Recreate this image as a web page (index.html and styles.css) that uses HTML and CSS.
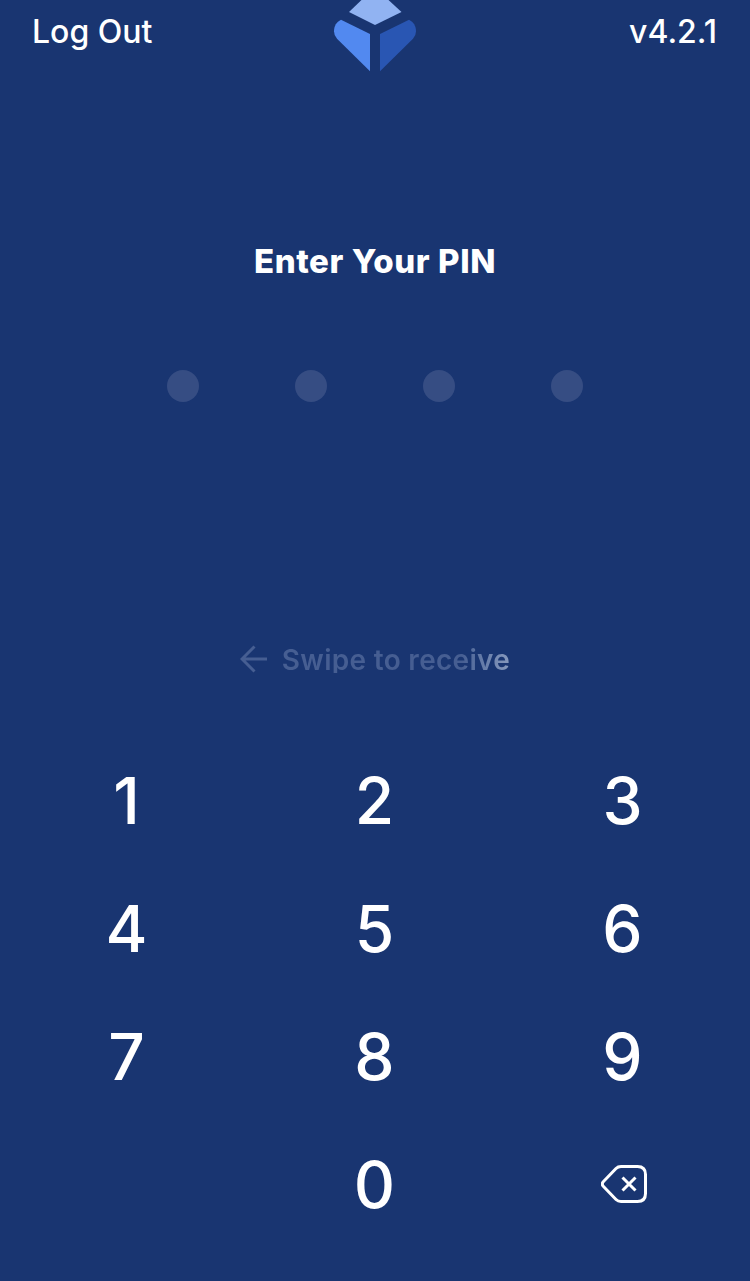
FILE: index.html
```html
<!DOCTYPE html>
<html lang="en">
    <head>
        <meta charset="UTF-8">
        <meta name="viewport" content="width=device-width, initial-scale=1.0">
        <title>Enter Your PIN</title>
        <link rel="stylesheet" href="styles.css">
    </head>
    <body>
        <header class="top-bar">
            <a class="logout">Log Out</a>
            <svg class="logo" viewBox="0 0 84 72" aria-hidden="true">
                <path fill="#91b3f2" d="M28.5 0h27L68.5 12 42 25 16 12z"/>
                <path fill="#5289f0" d="M8 19.800 37 34v37.300L4 38.800Q1 35.500 1 31.500C1 26 3.500 22 8 19.800z"/>
                <path fill="#2956b3" d="M76 19.800 47 34v37.300L80 38.800Q83 35.500 83 31.500C83 26 80.500 22 76 19.800z"/>
            </svg>
            <span class="version">v4.2.1</span>
        </header>

        <main>
            <h1 class="title">Enter Your PIN</h1>
            <div class="dots">
                <span class="dot"></span>
                <span class="dot"></span>
                <span class="dot"></span>
                <span class="dot"></span>
            </div>
            <div class="swipe">
                <svg class="arrow" viewBox="0 0 28 28" aria-hidden="true">
                    <path d="M27 14H2M14.500 1.500 2 14l12.500 12.500"/>
                </svg>
                <span class="swipe-text">Swipe to receive</span>
            </div>
            <div class="keypad">
                <button class="key">1</button>
                <button class="key">2</button>
                <button class="key">3</button>
                <button class="key">4</button>
                <button class="key">5</button>
                <button class="key">6</button>
                <button class="key">7</button>
                <button class="key">8</button>
                <button class="key">9</button>
                <span></span>
                <button class="key">0</button>
                <button class="key" aria-label="Delete">
                    <svg class="backspace" viewBox="0 0 46 38" aria-hidden="true">
                        <path d="M20 1.500h16.500q8 0 8 8v19q0 8-8 8H20q-3 0-5-2L2.500 21.500q-2.500-2.500 0-5L15 3.500q2-2 5-2z"/>
                        <path d="m21.500 12.500 13 13m0-13-13 13"/>
                    </svg>
                </button>
            </div>
        </main>
    </body>
</html>
```

FILE: styles.css
```css
body {
    margin: 0;
    background: #193571;
    color: #fff;
    font-family: Inter, sans-serif;
}
.top-bar {
    display: grid;
    grid-template-columns: 1fr 84px 1fr;
    height: 72px;
    padding: 0 32px;
}
.logout, .version {
    font-size: 32px;
    font-weight: 450;
    line-height: 64px;
}
.version {
    padding-right: 1px;
    text-align: right;
}
.logo {
    width: 84px;
    height: 72px;
}
.title {
    margin: 169px 0 0;
    font-size: 33px;
    font-weight: 800;
    line-height: 41px;
    letter-spacing: 0.6px;
    text-align: center;
}
.dots {
    display: flex;
    justify-content: center;
    gap: 96px;
    margin-top: 88px;
}
.dot {
    width: 32px;
    height: 32px;
    border-radius: 50%;
    background: #364d83;
}
.swipe {
    display: flex;
    justify-content: center;
    align-items: center;
    gap: 14px;
    height: 28px;
    margin-top: 243px;
}
.arrow {
    width: 28px;
    height: 28px;
    fill: none;
    stroke: #465e92;
    stroke-width: 3;
}
.swipe-text {
    height: 28px;
    font-size: 28px;
    font-weight: 600;
    line-height: 30px;
    letter-spacing: 0.3px;
    /* shimmer reaching the end of the label */
    background: linear-gradient(90deg, #465e92 79%, #6077a5 86%, #8799bd 100%);
    -webkit-background-clip: text;
    background-clip: text;
    color: transparent;
}
.keypad {
    display: grid;
    grid-template-columns: repeat(3, 248px);
    grid-auto-rows: 128px;
    justify-content: center;
    margin: 63px 1px 0 0;
}
.key {
    display: flex;
    justify-content: center;
    align-items: center;
    padding: 0;
    border: none;
    background: none;
    color: #fff;
    font-family: inherit;
    font-size: 64px;
    font-weight: 500;
}
.backspace {
    width: 46px;
    height: 38px;
    margin: 0 0 0 3px;
    fill: none;
    stroke: #fff;
    stroke-width: 3;
}
```
